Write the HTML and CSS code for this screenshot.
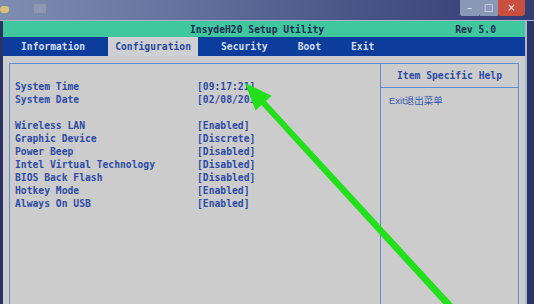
FILE: index.html
```html
<!DOCTYPE html>
<html lang="en">
<head>
    <meta charset="UTF-8">
    <title>InsydeH20 Setup Utility</title>
    <link rel="stylesheet" href="styles.css">
</head>
<body>
    <div class="desktop">
        <div class="titlebar">
            <span class="sys-dot"></span>
            <span class="sys-icon"></span>
            <div class="win-buttons">
                <span class="win-btn">&#8211;</span>
                <span class="win-btn">&#9633;</span>
                <span class="win-btn close">&#215;</span>
            </div>
        </div>

        <div class="frame">
            <div class="screen">
                <div class="bios-header">
                    <span class="bios-title">InsydeH20 Setup Utility</span>
                    <span class="bios-rev">Rev 5.0</span>
                </div>

                <div class="bios-nav">
                    <span class="tab">Information</span>
                    <span class="tab active">Configuration</span>
                    <span class="tab">Security</span>
                    <span class="tab">Boot</span>
                    <span class="tab">Exit</span>
                </div>

                <div class="bios-main">
                    <div class="panel">
                        <div class="settings">
                            <div class="row"><span class="name">System Time</span><span>[09:17:21]</span></div>
                            <div class="row"><span class="name">System Date</span><span>[02/08/2017]</span></div>
                            <div class="row blank"></div>
                            <div class="row"><span class="name">Wireless LAN</span><span>[Enabled]</span></div>
                            <div class="row"><span class="name">Graphic Device</span><span>[Discrete]</span></div>
                            <div class="row"><span class="name">Power Beep</span><span>[Disabled]</span></div>
                            <div class="row"><span class="name">Intel Virtual Technology</span><span>[Disabled]</span></div>
                            <div class="row"><span class="name">BIOS Back Flash</span><span>[Disabled]</span></div>
                            <div class="row"><span class="name">Hotkey Mode</span><span>[Enabled]</span></div>
                            <div class="row"><span class="name">Always On USB</span><span>[Enabled]</span></div>
                        </div>
                        <div class="help">
                            <div class="help-title">Item Specific Help</div>
                            <div class="help-text">Exit退出菜单</div>
                        </div>
                    </div>
                </div>
            </div>
            <div class="side"></div>
        </div>

        <!-- annotation arrow drawn over the screenshot -->
        <svg class="arrow" width="534" height="304" viewBox="0 0 534 304">
            <polygon fill="#22e11c" points="245,83 271.7,95.7 265.8,101.1 457.4,309 452.2,313.8 261.4,105.1 255.5,110.5"/>
        </svg>
    </div>
</body>
</html>
```

FILE: styles.css
```css
body {
    margin: 0;
    background-color: #2c3466;
    overflow: hidden;
}

.desktop {
    position: relative;
    width: 534px;
    height: 304px;
    overflow: hidden;
}

.titlebar {
    height: 21px;
    display: flex;
    align-items: flex-start;
    background: linear-gradient(90deg, #7e8db0 0%, #6676a0 30%, #4a5688 65%, #343c74 100%);
    border-bottom: 1px solid #a9b3c9;
    box-sizing: border-box;
}

.sys-dot {
    width: 9px;
    height: 7px;
    margin-top: 6px;
    border-radius: 4px;
    background-color: #d8c27a;
}

.sys-icon {
    width: 12px;
    height: 9px;
    margin: 4px 0 0 25px;
    background-color: #8e98ae;
}

.win-buttons {
    display: flex;
    margin-left: auto;
    margin-right: 9px;
}

.win-btn {
    width: 19px;
    height: 16px;
    font: 10px/15px "DejaVu Sans", sans-serif;
    color: #e8ecf4;
    text-align: center;
    background-color: #8a98b8;
    border-bottom-left-radius: 2px;
}

.win-btn.close {
    width: 27px;
    background-color: #c9503e;
    border-bottom-right-radius: 3px;
}

.frame {
    display: flex;
    padding-left: 3px;
}

.screen {
    width: 522px;
    font-family: "DejaVu Sans Mono", "Liberation Mono", monospace;
    font-size: 9.7px;
    font-weight: bold;
}

.side {
    width: 2px;
    height: 283px;
    background-color: #aeb6ca;
}

.bios-header {
    height: 16px;
    display: flex;
    align-items: center;
    background-color: #40c79e;
    color: #1c2b56;
}

.bios-title {
    margin-left: 187px;
}

.bios-rev {
    margin-left: auto;
    margin-right: 29px;
}

.bios-nav {
    height: 19px;
    display: flex;
    align-items: stretch;
    gap: 16px;
    padding-left: 11px;
    background-color: #0c3c9c;
    color: #d2dcef;
}

.tab {
    display: flex;
    align-items: center;
    padding: 0 7px;
}

.tab.active {
    background-color: #cfd0d3;
    color: #2b4a9e;
}

.bios-main {
    height: 248px;
    padding: 7px 6px 0 6px;
    background-color: #cccccc;
    box-sizing: border-box;
}

.panel {
    height: 260px;
    display: grid;
    grid-template-columns: 370px 138px;
    border: 1px solid #5a8ed6;
}

.settings {
    padding: 16px 0 0 5px;
    color: #2d4ba6;
}

.row {
    display: flex;
    height: 13px;
    line-height: 13px;
    white-space: nowrap;
}

.name {
    width: 182px;
}

.help {
    border-left: 1px solid #5a8ed6;
}

.help-title {
    height: 23px;
    display: flex;
    align-items: center;
    justify-content: center;
    border-bottom: 1px solid #5a8ed6;
    color: #2d4ba6;
}

.help-text {
    padding: 7px 0 0 8px;
    font-family: "Liberation Sans", "Noto Sans CJK SC", sans-serif;
    font-size: 9.5px;
    font-weight: normal;
    line-height: 12px;
    color: #3556b0;
}

.arrow {
    position: absolute;
    top: 0;
    left: 0;
}
```
